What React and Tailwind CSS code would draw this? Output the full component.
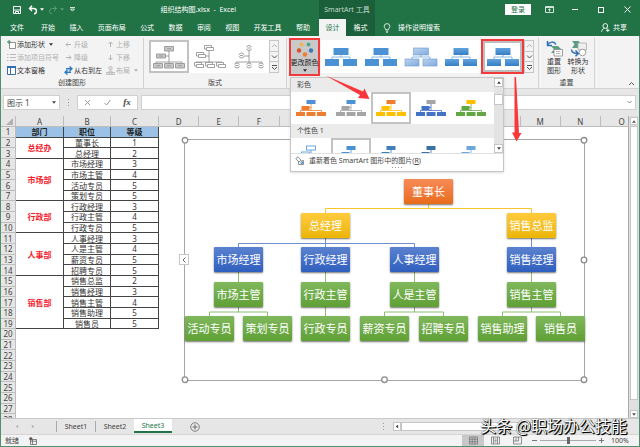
import React from "react";

const tabs = ["开始", "插入", "页面布局", "公式", "数据", "审阅", "视图", "开发工具", "帮助"];

const groups = [
  { name: "总经办", rows: [["董事长", 1], ["总经理", 2]] },
  { name: "市场部", rows: [["市场经理", 3], ["市场主管", 4], ["活动专员", 5], ["策划专员", 5]] },
  { name: "行政部", rows: [["行政经理", 3], ["行政主管", 4], ["行政专员", 5]] },
  { name: "人事部", rows: [["人事经理", 3], ["人是主管", 4], ["薪资专员", 5], ["招聘专员", 5]] },
  { name: "销售部", rows: [["销售总监", 2], ["销售经理", 3], ["销售主管", 4], ["销售助理", 5], ["销售员", 5]] },
];

const rows = groups.flatMap((g) =>
  g.rows.map((r, i) => ({ dept: i === 0 ? g.name : null, span: g.rows.length, job: r[0], level: r[1] }))
);

const restColumns = ["D", "E", "F", "G", "H", "I", "J", "K", "L", "M", "N"];

const orange = "bg-linear-to-b from-[#f68b55] to-[#e96b17]";
const yellow = "bg-linear-to-b from-[#ffcb3a] to-[#ecb500]";
const blue = "bg-linear-to-b from-[#5b82cf] to-[#2f5fbe]";
const green = "bg-linear-to-b from-[#80b85c] to-[#5fa034]";

const nodes = [
  { t: "董事长", x: 219, y: 40, c: orange },
  { t: "总经理", x: 116, y: 74, c: yellow },
  { t: "销售总监", x: 322, y: 74, c: yellow },
  { t: "市场经理", x: 29, y: 108, c: blue },
  { t: "行政经理", x: 116, y: 108, c: blue },
  { t: "人事经理", x: 205, y: 108, c: blue },
  { t: "销售经理", x: 322, y: 108, c: blue },
  { t: "市场主管", x: 29, y: 143, c: green },
  { t: "行政主管", x: 116, y: 143, c: green },
  { t: "人是主管", x: 205, y: 143, c: green },
  { t: "销售主管", x: 322, y: 143, c: green },
  { t: "活动专员", x: 0, y: 177, c: green },
  { t: "策划专员", x: 58, y: 177, c: green },
  { t: "行政专员", x: 116, y: 177, c: green },
  { t: "薪资专员", x: 175, y: 177, c: green },
  { t: "招聘专员", x: 234, y: 177, c: green },
  { t: "销售助理", x: 293, y: 177, c: green },
  { t: "销售员", x: 351, y: 177, c: green },
];

function Caret({ className = "" }) {
  return (
    <svg viewBox="0 0 6 4" className={"h-[3px] w-[4px] shrink-0 " + className} aria-hidden="true">
      <path d="M0 0h6L3 4z" fill="currentColor" />
    </svg>
  );
}

function TitleBar() {
  return (
    <div className="flex h-[19px] text-white">
      <div className="flex w-[319px] shrink-0 items-center pl-[12px]">
        <button aria-label="保存" className="w-[10px]">
          <svg viewBox="0 0 10 10" className="size-[10px]" fill="none" stroke="currentColor">
            <path d="M1.500 1.500h7v7h-7zM1.500 5h7M3.500 8.500V6.500h3v2" />
          </svg>
        </button>
        <button aria-label="撤消" className="ml-[6px] flex items-center gap-[2px]">
          <svg viewBox="0 0 10 10" className="size-[10px]" fill="none" stroke="currentColor" strokeWidth="1.4">
            <path d="M4 .8L1.500 3.500 4 6M1.500 3.500h4.200c3.600 0 3.600 5 .3 5.300" />
          </svg>
          <Caret className="w-[3px]" />
        </button>
        <button aria-label="恢复" className="ml-[4px] flex items-center gap-[2px] text-[#5c9a78]">
          <svg viewBox="0 0 10 10" className="size-[10px]" fill="none" stroke="currentColor">
            <path d="M6 .8L8.500 3.500 6 6M8.500 3.500H4.300C.7 3.500.7 8.500 4 8.800" />
          </svg>
          <Caret className="w-[3px]" />
        </button>
        <button aria-label="自定义快速访问工具栏" className="ml-[6px]">
          <svg viewBox="0 0 5 5" className="size-[5px]" fill="none" stroke="currentColor" strokeWidth=".8">
            <path d="M0 .5h5M.5 2h4l-2 2.200z" />
          </svg>
        </button>
        <h1 className="mr-[83px] ml-auto whitespace-nowrap">组织结构图.xlsx&nbsp; - &nbsp;Excel</h1>
      </div>
      <div className="flex w-[56px] shrink-0 items-center justify-center bg-[#1b5f3a] text-[#c3d9cc]">SmartArt 工具</div>
      <div className="ml-auto flex items-center">
        <button className="mr-[5px] h-[11px] w-[26px] bg-white leading-[11px] text-[#217346]">登录</button>
        <button aria-label="功能区显示选项" className="flex w-[26px] justify-center">
          <svg viewBox="0 0 9 7" className="h-[7px] w-[9px]" fill="none" stroke="currentColor">
            <path d="M.5.5h8v6h-8zM.5 1.500h8M4.500 5.500V3M3.200 4l1.300-1.200L5.800 4" strokeWidth=".8" />
          </svg>
        </button>
        <button aria-label="最小化" className="flex w-[26px] justify-center">
          <span className="h-px w-[6px] bg-white" />
        </button>
        <button aria-label="最大化" className="flex w-[26px] justify-center">
          <span className="size-[6px] border border-white" />
        </button>
        <button aria-label="关闭" className="flex w-[26px] justify-center">
          <svg viewBox="0 0 7 7" className="size-[7px]" stroke="currentColor">
            <path d="M.5.5l6 6M6.500.5l-6 6" />
          </svg>
        </button>
      </div>
    </div>
  );
}

function TabBar() {
  return (
    <div className="flex h-[17px] items-stretch whitespace-nowrap text-white">
      <button className="w-[41px] shrink-0 pl-[10px] text-left">文件</button>
      <nav className="mr-[9px] flex w-[269px] shrink-0 justify-between">
        {tabs.map((t) => (
          <button key={t}>{t}</button>
        ))}
      </nav>
      <button className="w-[27px] shrink-0 bg-[#f3f3f3] text-[#217346]">设计</button>
      <button className="w-[29px] shrink-0 bg-[#1b5f3a]">格式</button>
      <button className="ml-[8px] flex items-center gap-[7px]">
        <svg viewBox="0 0 8 10" className="h-[10px] w-[8px]" fill="none" stroke="currentColor" strokeWidth=".8">
          <path d="M2.700 6.800C2.700 5.500 1.200 5 1.200 3.400a2.800 2.800 0 015.600 0C6.800 5 5.300 5.500 5.300 6.800zM2.800 8.200h2.400M3.200 9.400h1.600" />
        </svg>
        操作说明搜索
      </button>
      <button className="mr-[13px] ml-auto flex items-center gap-[3px]">
        <svg viewBox="0 0 9 9" className="size-[9px]" fill="none" stroke="currentColor" strokeWidth=".9">
          <circle cx="4.300" cy="3" r="2.400" />
          <path d="M.6 8.800c.2-2 1.400-3.200 2.800-3.500M5.400 5.300l.8.5M5 7.300h3.600M6.800 5.500v3.500" />
        </svg>
        共享
      </button>
    </div>
  );
}

const smallIcons = {
  add: (
    <>
      <path d="M2.500 2.500h6v6h-6z" fill="#fff" stroke="#777" strokeWidth=".8" />
      <path d="M0 2h4M2 0v4" stroke="#3a8a5c" />
    </>
  ),
  list: <path d="M0 1.500h1.500M0 4.500h1.500M0 7.500h1.500M3 1.500h6M3 4.500h6M3 7.500h6" stroke="#b9b9b9" />,
  pane: (
    <>
      <path d="M.5.5h8v8h-8z" fill="#fff" stroke="#3b6ea5" />
      <path d="M0 0h9v2H0z" fill="#2f6fb5" />
      <path d="M3.500 2v6.500" stroke="#3b6ea5" />
    </>
  ),
  left: <path d="M7 4.500H2M4 2.500l-2 2 2 2" stroke="#b3b3b3" />,
  right: <path d="M2 4.500h5M5 2.500l2 2-2 2" stroke="#b3b3b3" />,
  up: <path d="M4.500 7V2M2.500 4l2-2 2 2" stroke="#b3b3b3" />,
  down: <path d="M4.500 2v5M2.500 5l2 2 2-2" stroke="#b3b3b3" />,
  swap: (
    <>
      <path d="M2 2.800h5M5.500.5L8 2.800 5.500 5" stroke="#2b7cc4" strokeWidth="1.400" />
      <path d="M7 6.200H2M3.500 4L1 6.200l2.500 2.300" stroke="#2b7cc4" strokeWidth="1.400" />
    </>
  ),
  layout: <path d="M3 .8h3v2.500H3zM4.500 3.300V5M1.500 6.500L4.500 5l3 1.500M.5 6.500h2.500v2H.5zM6 6.500h2.500v2H6zM3.500 6.500h2v2h-2z" stroke="#b3b3b3" strokeWidth=".8" />,
};

function SmallButton({ icon, children, off, caret }) {
  return (
    <button className={"flex h-[13px] items-center gap-[1px] whitespace-nowrap " + (off ? "text-[#b1b1b1]" : "text-[#333]")}>
      <svg viewBox="0 0 9 9" className="size-[9px] shrink-0" fill="none" aria-hidden="true">
        {smallIcons[icon]}
      </svg>
      {children}
      {caret && <Caret className="ml-[3px]" />}
    </button>
  );
}

function GalleryScroll() {
  return (
    <div className="flex w-[10px] shrink-0 flex-col border border-[#c6c6c6] bg-[#f3f3f3] text-[#555]">
      {["M1 4l2.500-2.500L6 4", "M1 1.500L3.500 4 6 1.500", "M1 .5h5M1 2l2.500 2.500L6 2"].map((d, i) => (
        <button
          key={d}
          aria-label={["上一行", "下一行", "其他"][i]}
          className={"flex flex-1 items-center justify-center " + (i ? "border-t border-[#c6c6c6]" : "text-[#b5b5b5]")}
        >
          <svg viewBox="0 0 7 5" className="h-[5px] w-[7px]" fill="none" stroke="currentColor">
            <path d={d} />
          </svg>
        </button>
      ))}
    </div>
  );
}

function LayoutThumb({ kind }) {
  const g = { fill: kind === 0 ? "#c9c9c9" : "#fff", stroke: "#8a8a8a", strokeWidth: 0.8 };
  return (
    <svg viewBox="0 0 36 28" className="h-[28px] w-[36px]" fill="none" aria-hidden="true">
      <path d="M18 7v12M5 22v-3h26v3M18 19v3M12 13h6" stroke="#8a8a8a" strokeWidth=".8" />
      {kind === 0 && (
        <g {...g}>
          <path d="M13.500 3.500h9v4.500h-9zM5.500 11h9v4h-9zM2.500 20.500h9v4.500h-9zM13.500 20.500h9v4.500h-9zM24.500 20.500h9v4.500h-9z" />
          <path d="M16 5.700h4M8 13h4M5 22.700h4M16 22.700h4M27 22.700h4" />
        </g>
      )}
      {kind === 1 && (
        <g {...g}>
          <path d="M13.500 2.500h7V6h-7zM5.500 9.500h7V13h-7zM3.500 19.500h7V23h-7zM14.500 19.500h7V23h-7zM25.500 19.500h7V23h-7z" />
          <path d="M15.500 4.500h7v3h-7zM7.500 11.500h7v3h-7zM5.500 21.500h7v3h-7zM16.500 21.500h7v3h-7zM27.500 21.500h7v3h-7z" />
        </g>
      )}
      {kind === 2 && (
        <g {...g}>
          <circle cx="18" cy="5" r="2.500" />
          <circle cx="10.500" cy="12.500" r="2.500" />
          <circle cx="6" cy="22.500" r="2.500" />
          <circle cx="18" cy="22.500" r="2.500" />
          <circle cx="30" cy="22.500" r="2.500" />
          <path d="M15 5h6M7.500 12.500h6M3 22.500h6M15 22.500h6M27 22.500h6" stroke="#fff" strokeWidth="1.600" />
          <path d="M16.500 5h3M9 12.500h3M4.500 22.500h3M16.500 22.500h3M28.500 22.500h3" />
        </g>
      )}
    </svg>
  );
}

function StyleThumb({ kind }) {
  const fill = kind === 2 ? "url(#soft)" : kind > 2 ? "url(#deep)" : "#4a92d4";
  return (
    <svg viewBox="0 0 34 20" className="h-[20px] w-[34px]" aria-hidden="true">
      <defs>
        <linearGradient id="soft" x1="0" y1="0" x2="1" y2="1">
          <stop offset="0" stopColor="#bcd3ef" />
          <stop offset="1" stopColor="#7fabdf" />
        </linearGradient>
        <linearGradient id="deep" x1="0" y1="0" x2="0" y2="1">
          <stop offset="0" stopColor="#62a3dd" />
          <stop offset="1" stopColor="#357fc4" />
        </linearGradient>
      </defs>
      <path d="M17 8v2M8 12v-2h18v2" fill="none" stroke="#6fa5d8" strokeWidth=".8" />
      <g fill={fill} stroke={kind === 2 ? "#6b9bd0" : "none"} strokeWidth=".6">
        <rect x="9.500" y="1" width="15" height="7" />
        <rect x="1" y="12" width="14" height="7" />
        <rect x="19" y="12" width="14" height="7" />
      </g>
    </svg>
  );
}

function ColorThumb({ top, rest, line, hollow }) {
  return (
    <svg viewBox="0 0 32 18" className="h-[18px] w-[32px] shrink-0" aria-hidden="true">
      <path d="M16 5v7M12 8.500h4M5.500 13v-1.500h21V13" fill="none" stroke={line || rest} strokeWidth=".8" />
      <rect x="11.500" y="1" width="9" height="4" fill={hollow ? "#fff" : top} stroke={hollow ? top : "none"} strokeWidth=".8" />
      <rect x="6.500" y="7" width="8" height="4" fill={hollow ? "#fff" : rest} stroke={hollow ? rest : "none"} strokeWidth=".8" />
      <g fill={rest}>
        <rect x="1" y="13" width="9" height="4" />
        <rect x="11.500" y="13" width="9" height="4" />
        <rect x="22" y="13" width="9" height="4" />
      </g>
    </svg>
  );
}

const colorful = [
  { top: "#4a92d4", rest: "#ed7d31" },
  { top: "#4a92d4", rest: "#a5a5a5" },
  { top: "#ed7d31", rest: "#ffc000" },
  { top: "#a5a5a5", rest: "#4472c4" },
  { top: "#ffc000", rest: "#62a744" },
];
const accent = [
  { top: "#4a92d4", rest: "#4a92d4", hollow: true },
  { top: "#4a92d4", rest: "#4a92d4" },
  { top: "#3f7fba", rest: "#3f7fba" },
  { top: "#3a70a3", rest: "#3a70a3" },
  { top: "#6ca6dc", rest: "#6ca6dc" },
];

function ColorRow({ items, selected, className }) {
  return (
    <div className={"flex overflow-hidden bg-white " + className}>
      {items.map((c, i) => (
        <button
          key={i}
          aria-label={"颜色 " + (i + 1)}
          className={
            "flex w-[40px] shrink-0 justify-center border-2 pt-[5px] " +
            (i === selected ? "border-[#c2c2c2]" : "border-transparent")
          }
        >
          <ColorThumb {...c} />
        </button>
      ))}
    </div>
  );
}

function ColorMenu() {
  return (
    <div className="absolute top-[39px] left-[1px] z-10 w-[214px] border border-[#c6c6c6] bg-white text-[#444] shadow-sm">
      <div className="flex h-[75px]">
        <div className="flex-1 overflow-hidden">
          <div className="h-[14px] bg-[#ebebeb] pl-[6px] leading-[14px]">彩色</div>
          <ColorRow items={colorful} selected={2} className="h-[32px]" />
          <div className="h-[14px] bg-[#ebebeb] pl-[6px] leading-[14px]">个性色 1</div>
          <ColorRow items={accent} selected={1} className="h-[32px]" />
        </div>
        <div className="flex w-[9px] shrink-0 flex-col bg-[#e3e3e3]">
          <button aria-label="向上" className="flex h-[9px] items-center justify-center border border-[#c6c6c6] bg-white">
            <Caret className="rotate-180" />
          </button>
          <div className="mt-[7px] h-[11px] border border-[#c6c6c6] bg-white" />
          <button aria-label="向下" className="mt-auto flex h-[9px] items-center justify-center border border-[#c6c6c6] bg-white">
            <Caret />
          </button>
        </div>
      </div>
      <button className="flex h-[14px] w-full items-center gap-[5px] border-t border-[#e1e1e1] pl-[4px] whitespace-nowrap">
        <svg viewBox="0 0 9 9" className="size-[9px]" fill="none" stroke="#777" strokeWidth=".8" aria-hidden="true">
          <path d="M.8 2.500L3 .8l3 3.500-2.200 1.700zM3.500 5v3.500h5v-4h-2" />
          <path d="M6 5.800h1.500v1.700H6z" stroke="#2b7cc4" />
        </svg>
        <span>
          重新着色 SmartArt 图形中的图片(<u>R</u>)
        </span>
      </button>
      <div className="flex h-[4px] justify-center gap-[2px]">
        {[0, 1, 2, 3].map((i) => (
          <i key={i} className="size-px bg-[#999]" />
        ))}
      </div>
    </div>
  );
}

function Group({ label, className, children }) {
  return (
    <section className={"flex shrink-0 flex-col border-r border-[#d2d2d2] " + className}>
      <div className="flex h-[39px]">{children}</div>
      <div className="text-center leading-[11px] text-[#444]">{label}</div>
    </section>
  );
}

function Ribbon() {
  return (
    <div className="flex h-[53px] shrink-0 border-b border-[#d2d2d2] bg-[#f3f3f3] pt-[2px]">
      <Group label="创建图形" className="h-[50px] w-[143px] px-[6px]">
        <div className="w-[57px] shrink-0">
          <SmallButton icon="add" caret>添加形状</SmallButton>
          <SmallButton icon="list" off>添加项目符号</SmallButton>
          <SmallButton icon="pane">文本窗格</SmallButton>
        </div>
        <div className="w-[42px] shrink-0">
          <SmallButton icon="left" off>升级</SmallButton>
          <SmallButton icon="right" off>降级</SmallButton>
          <SmallButton icon="swap">从右到左</SmallButton>
        </div>
        <div className="shrink-0">
          <SmallButton icon="up" off>上移</SmallButton>
          <SmallButton icon="down" off>下移</SmallButton>
          <SmallButton icon="layout" off caret>布局</SmallButton>
        </div>
      </Group>
      <Group label="版式" className="h-[50px] w-[143px] px-[5px]">
        <div className="mt-[2px] flex h-[33px] bg-white">
          {[0, 1, 2].map((k) => (
            <button
              key={k}
              aria-label={"版式 " + (k + 1)}
              className={"flex w-[40px] items-center justify-center border-2 " + (k === 0 ? "border-[#c2c2c2]" : "border-transparent")}
            >
              <LayoutThumb kind={k} />
            </button>
          ))}
          <GalleryScroll />
        </div>
      </Group>
      <Group label="" className="h-[50px] w-[252px] pl-[2px]">
        <div className="relative">
          <button className="flex h-[38px] w-[31px] flex-col items-center border-2 border-[#f23a3a] bg-[#c9c9c9] text-[#222]">
            <svg viewBox="0 0 18 17" className="h-[18px] w-[18px]" aria-hidden="true">
              <circle cx="5.500" cy="4" r="2" fill="#f0b64c" />
              <circle cx="12.500" cy="4" r="2" fill="#57a58a" />
              <circle cx="3" cy="10" r="2.200" fill="#d9512c" />
              <circle cx="15" cy="10" r="2.200" fill="#3b78b8" />
              <circle cx="9" cy="14" r="2.200" fill="#ed7d31" />
            </svg>
            <span className="leading-[10px] whitespace-nowrap">更改颜色</span>
            <Caret className="mt-[1px] w-[3px]" />
          </button>
          <ColorMenu />
        </div>
        <div className="mt-[2px] ml-[1px] flex h-[33px] bg-white">
          {[0, 1, 2, 3].map((k) => (
            <button key={k} aria-label={"样式 " + (k + 1)} className="flex w-[40px] items-center justify-center">
              <StyleThumb kind={k} />
            </button>
          ))}
          <button aria-label="样式 5" className="-mt-px flex h-[35px] w-[43px] border-2 border-[#f23a3a]">
            <span className="flex h-full w-full items-center justify-center border-2 border-[#bdbdbd]">
              <StyleThumb kind={4} />
            </span>
          </button>
          <GalleryScroll />
        </div>
      </Group>
      <Group label="重置" className="h-[50px] w-[56px] px-[3px]">
        <button className="flex w-[24px] flex-col items-center pt-[2px] text-[#333]">
          <svg viewBox="0 0 17 17" className="h-[17px] w-[17px]" aria-hidden="true">
            <path d="M5 6h7l4 4-3 3H5l3-3.500z" fill="#5b9d82" />
            <path d="M8 9.500h8.500v6.500H8z" fill="#fff" stroke="#888" strokeWidth=".8" />
            <path d="M10 11.500h4.500M10 13.500h4.500" stroke="#999" strokeWidth=".7" />
            <path d="M1.500 1v4.500H6M1.500 5C3.500 1.500 8 1 10 4.500" fill="none" stroke="#2f6fb5" strokeWidth="1.500" />
          </svg>
          <span className="leading-[9px]">重置<br />图形</span>
        </button>
        <button className="flex w-[24px] flex-col items-center pt-[2px] text-[#333]">
          <svg viewBox="0 0 17 17" className="h-[17px] w-[17px]" aria-hidden="true">
            <path d="M2 1h6.500l3 3.500-3 3.500H2l2.500-3.500z" fill="#5b9d82" />
            <path d="M8 3h8.500v7H8z" fill="#eee" stroke="#aaa" strokeWidth=".8" />
            <circle cx="12.500" cy="12.500" r="3.300" fill="#fff" stroke="#888" strokeWidth=".8" />
            <path d="M1.500 9.500c.3 3 2.500 4 6 4M5.500 10.500l2.800 3-2.800 2.700" fill="none" stroke="#2f6fb5" strokeWidth="1.500" />
          </svg>
          <span className="leading-[9px] whitespace-nowrap">转换为<br />形状</span>
        </button>
      </Group>
      <button aria-label="折叠功能区" className="mt-auto mr-[4px] mb-[2px] ml-auto">
        <svg viewBox="0 0 7 5" className="h-[5px] w-[7px]" fill="none" stroke="#555">
          <path d="M1 4l2.500-2.500L6 4" />
        </svg>
      </button>
    </div>
  );
}

function FormulaBar() {
  return (
    <div className="flex h-[27px] shrink-0 items-center bg-[#e6e6e6] pr-[3px] pb-[1px] pl-[2px] text-[#444]">
      <div className="flex h-[15px] w-[57px] shrink-0 items-center border border-[#d0d0d0] bg-white pr-[3px]">
        <input aria-label="名称框" defaultValue="图示 1" className="w-full min-w-0 pl-[3px] text-[8px] outline-none" />
        <Caret />
      </div>
      <svg viewBox="0 0 1 7" className="ml-[8px] h-[7px] w-px shrink-0" aria-hidden="true">
        <path d="M0 0h1v1H0zM0 3h1v1H0zM0 6h1v1H0z" fill="#999" />
      </svg>
      <div className="ml-[8px] flex h-[15px] w-[61px] shrink-0 items-center justify-around border border-[#d0d0d0] bg-white">
        <button aria-label="取消">
          <svg viewBox="0 0 7 7" className="size-[7px]" stroke="#999"><path d="M1 1l5 5M6 1L1 6" /></svg>
        </button>
        <button aria-label="输入">
          <svg viewBox="0 0 7 7" className="size-[7px]" stroke="#999" fill="none"><path d="M.5 4l2 2L6.500 1" /></svg>
        </button>
        <button className="font-['Liberation_Serif',serif] text-[9px] leading-[9px] font-bold text-[#444] italic">fx</button>
      </div>
      <div className="ml-[3px] flex h-[15px] min-w-0 flex-1 items-center border border-[#d0d0d0] bg-white pr-[3px]">
        <input aria-label="编辑栏" className="w-full min-w-0 pl-[3px] text-[8px] outline-none" />
        <svg viewBox="0 0 5 4" className="h-[4px] w-[5px] shrink-0" fill="none" stroke="#888"><path d="M.5 1l2 2 2-2" /></svg>
      </div>
    </div>
  );
}

const headCell = "border-r border-b border-[#bdbdbd] bg-[#e6e6e6] p-0 text-center font-normal text-[#444]";
const dataCell = "border-r border-b border-[#444] p-0 text-center text-[#333]";

function Grid() {
  return (
    <table className="h-[309px] w-full table-fixed border-separate border-spacing-0 text-[8px] leading-[9px]">
      <colgroup>
        <col className="w-[15px]" />
        <col className="w-[48px]" />
        <col className="w-[47px]" />
        <col className="w-[48px]" />
        {restColumns.map((c) => (
          <col key={c} />
        ))}
        <col className="w-[27px]" />
      </colgroup>
      <thead>
        <tr className="h-[11px]">
          <td className={headCell}>
            <svg viewBox="0 0 7 7" className="mr-[2px] ml-auto size-[7px]" aria-hidden="true"><path d="M7 0v7H0z" fill="#b1b1b1" /></svg>
          </td>
          {["A", "B", "C", ...restColumns].map((c) => (
            <th key={c} className={headCell}>{c}</th>
          ))}
          <th className="border-b border-[#bdbdbd] bg-[#e6e6e6] p-0 pl-[14px] font-normal text-[#444]">O</th>
        </tr>
      </thead>
      <tbody>
        {Array.from({ length: 28 }, (_, i) => i + 1).map((n) => {
          const r = rows[n - 2];
          return (
            <tr key={n}>
              <th className={headCell}>{n}</th>
              {n === 1 &&
                ["部门", "职位", "等级"].map((h) => (
                  <th key={h} className="border-r border-b border-[#444] bg-[#9bc2e6] p-0 font-bold text-[#222]">{h}</th>
                ))}
              {r && r.dept && (
                <th rowSpan={r.span} className="border-r border-b border-[#444] p-0 font-bold text-[#f5222d]">{r.dept}</th>
              )}
              {r && <td className={dataCell}>{r.job}</td>}
              {r && <td className={dataCell}>{r.level}</td>}
              <td colSpan={n <= 19 ? 12 : 15} className="p-0" />
            </tr>
          );
        })}
      </tbody>
    </table>
  );
}

function OrgChart() {
  return (
    <div className="absolute top-[23px] left-[183px] h-[242px] w-[401px] border border-[#a6a6a6] text-[11px] text-white">
      <svg viewBox="0 0 400 242" className="absolute inset-0 h-[242px] w-[400px] overflow-visible" fill="none" aria-hidden="true">
        <path d="M243.500 64v4.500M140.500 74v-5.500h206V74" stroke="#f9c62f" />
        <path d="M140.500 98v10M53.500 108v-4.500h176v4.500M346.500 98v10" stroke="#6f8fd2" />
        <path d="M53.500 132v11M140.500 132v11M229.500 132v11M346.500 132v11M53.500 167v5M24.500 177v-5h58v5M140.500 167v10M229.500 167v5M199.500 177v-5h59v5M346.500 167v5M317.500 177v-5h58v5" stroke="#8dbd6e" />
      </svg>
      {nodes.map((n) => (
        <div
          key={n.t}
          className={"absolute flex h-[25px] w-[49px] items-center justify-center rounded-[1px] whitespace-nowrap shadow-[0_1px_2px_rgba(0,0,0,0.55)] " + n.c}
          style={{ left: n.x, top: n.y - 1 }}
        >
          {n.t}
        </div>
      ))}
      <svg viewBox="0 0 400 240" className="absolute inset-0 h-[240px] w-[399px] overflow-visible" aria-hidden="true">
        <g fill="#fff" stroke="#8c8c8c" strokeWidth="1.300">
          <circle cx="0" cy="0" r="2.800" />
          <circle cx="400" cy="0" r="2.800" />
          <circle cx="400" cy="120" r="2.800" />
          <circle cx="400" cy="240" r="2.800" />
          <circle cx="200" cy="240" r="2.800" />
          <circle cx="0" cy="240" r="2.800" />
        </g>
      </svg>
      <button aria-label="文本窗格" className="absolute top-[114px] -left-[6px] flex h-[11px] w-[10px] items-center justify-center border border-[#c6c6c6] bg-white">
        <svg viewBox="0 0 4 6" className="h-[6px] w-[4px]" fill="none" stroke="#666"><path d="M3.500.5L1 3l2.500 2.500" /></svg>
      </button>
    </div>
  );
}

function Sheet() {
  return (
    <div className="flex min-h-0 flex-1 bg-white">
      <div className="relative min-w-0 flex-1 overflow-hidden border-r border-[#a9a9a9]">
        <Grid />
        <OrgChart />
      </div>
      <div className="flex w-[10px] shrink-0 flex-col bg-[#e0e0e0] px-[1px] text-[#555]">
        <button aria-label="向上滚动" className="mt-[1px] flex h-[8px] items-center justify-center border border-[#c6c6c6] bg-white">
          <Caret className="rotate-180" />
        </button>
        <div className="mt-[1px] mb-[10px] flex-1 border border-[#c6c6c6] bg-white" />
        <button aria-label="向下滚动" className="flex h-[8px] items-center justify-center border border-[#c6c6c6] bg-white">
          <Caret />
        </button>
      </div>
    </div>
  );
}

function SheetTabs() {
  return (
    <div className="flex h-[16px] shrink-0 items-center border-t border-[#c9c9c9] bg-[#e6e6e6] text-[#444]">
      <div className="flex w-[55px] shrink-0 gap-[12px] pl-[14px]">
        <button aria-label="上一个工作表"><Caret className="rotate-90 text-[#b5b5b5]" /></button>
        <button aria-label="下一个工作表"><Caret className="-rotate-90 text-[#b5b5b5]" /></button>
      </div>
      <button className="h-[11px] w-[39px] border-l border-[#aaa]">Sheet1</button>
      <button className="h-[11px] w-[39px] border-l border-[#aaa]">Sheet2</button>
      <button className="h-[14px] w-[38px] self-start border-b-2 border-[#217346] bg-white text-[#217346]">Sheet3</button>
      <button aria-label="新工作表" className="ml-[18px]">
        <svg viewBox="0 0 10 10" className="size-[10px]" fill="none" stroke="#777" strokeWidth=".9">
          <circle cx="5" cy="5" r="4.300" />
          <path d="M5 2.500v5M2.500 5h5" strokeWidth="1.200" />
        </svg>
      </button>
      <div className="ml-auto flex w-[256px] items-center">
        <svg viewBox="0 0 1 7" className="h-[7px] w-px" aria-hidden="true">
          <path d="M0 0h1v1H0zM0 3h1v1H0zM0 6h1v1H0z" fill="#999" />
        </svg>
        <button aria-label="向左滚动" className="ml-[9px] flex h-[9px] w-[8px] items-center justify-center border border-[#c6c6c6] bg-white">
          <Caret className="rotate-90" />
        </button>
        <div className="h-[9px] w-[150px] border border-[#c6c6c6] bg-white" />
      </div>
    </div>
  );
}

function StatusBar() {
  return (
    <div className="flex h-[12px] shrink-0 items-center border-t border-[#d5d5d5] bg-[#f3f3f3] pl-[4px] text-[#444]">
      <span>就绪</span>
      <svg viewBox="0 0 9 8" className="ml-[10px] h-[8px] w-[9px]" fill="none" stroke="#666" strokeWidth=".8" aria-hidden="true">
        <path d="M1.500 2.500h6v5h-6zM1.500 4.200h6M3.500 2.500v5" />
        <circle cx="1.800" cy="1.800" r="1.300" fill="#555" />
      </svg>
      <div className="ml-auto flex items-center">
        <button aria-label="普通" className="flex h-[11px] w-[22px] items-center justify-center bg-[#c8c8c8]">
          <svg viewBox="0 0 9 9" className="size-[9px]" fill="none" stroke="#777" strokeWidth=".8"><path d="M.5 1h8v7h-8zM.5 3.300h8M.5 5.700h8M3.200 1v7M5.800 1v7" /></svg>
        </button>
        <button aria-label="页面布局" className="flex w-[22px] justify-center">
          <svg viewBox="0 0 9 9" className="size-[9px]" fill="none" stroke="#777" strokeWidth=".8"><path d="M.5 1h8v7h-8zM2.500 1v7M6.500 1v7M3.500 3h2M3.500 4.500h2M3.500 6h2" /></svg>
        </button>
        <button aria-label="分页预览" className="flex w-[22px] justify-center">
          <svg viewBox="0 0 9 9" className="size-[9px]" fill="none" stroke="#777" strokeWidth=".8"><path d="M.5 1h8v7h-8zM.5 5h5V1M3 1v4" /></svg>
        </button>
        <button aria-label="缩小" className="ml-[4px] h-px w-[5px] bg-[#777]" />
        <input
          type="range"
          aria-label="显示比例"
          defaultValue="50"
          className="mr-[3px] ml-[3px] h-[7px] w-[56px] appearance-none bg-[linear-gradient(#aaa,#aaa)] bg-[length:100%_1px] bg-center bg-no-repeat [&::-webkit-slider-thumb]:h-[7px] [&::-webkit-slider-thumb]:w-[3px] [&::-webkit-slider-thumb]:appearance-none [&::-webkit-slider-thumb]:bg-[#666]"
        />
        <button aria-label="放大">
          <svg viewBox="0 0 5 5" className="size-[5px]" stroke="#777"><path d="M0 2.500h5M2.500 0v5" /></svg>
        </button>
        <span className="w-[35px] pl-[7px]">100%</span>
      </div>
    </div>
  );
}

export default function App() {
  return (
    <div className="relative flex h-screen w-full flex-col overflow-hidden bg-[#217346] font-['Noto_Sans','Noto_Sans_CJK_SC',sans-serif] text-[7px] leading-[9px]">
      <header className="shrink-0">
        <TitleBar />
        <TabBar />
      </header>
      <main className="flex min-h-0 flex-1 flex-col border-x border-b border-[#4f9070]">
        <Ribbon />
        <FormulaBar />
        <Sheet />
        <SheetTabs />
        <StatusBar />
      </main>
      <svg viewBox="0 0 640 160" className="pointer-events-none absolute top-0 left-0 z-20 h-[160px] w-[640px]" fill="#f9363a" aria-hidden="true">
        <path d="M325.500 75.500L363 91.500l1.500-3 5 10.500-11.500-1 2-3z" />
        <path d="M514.500 77h1.500l3 56h2.500L516.500 141.500 512 132.500h2.500z" />
      </svg>
      <p className="absolute right-[13px] bottom-[13px] z-20 font-['Noto_Sans_CJK_SC',sans-serif] text-[16px] leading-[18px] whitespace-nowrap text-white [text-shadow:1px_1px_1px_#000,0_0_1px_#000,1px_1px_0_#222]">
        头条 @职场办公技能
      </p>
    </div>
  );
}
